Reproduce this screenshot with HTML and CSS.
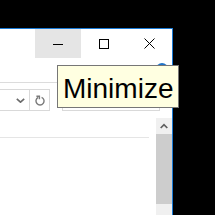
FILE: index.html
```html
<!DOCTYPE html>
<html>
<head>
<meta charset="utf-8">
<link rel="stylesheet" href="styles.css">
</head>
<body>
<div class="window">
  <div class="titlebar">
    <div class="cap cap-min hover">
      <svg width="10" height="10" viewBox="0 0 10 10"><path d="M0 5.5H10" stroke="#000" stroke-width="1"/></svg>
    </div>
    <div class="cap cap-max">
      <svg width="10" height="10" viewBox="0 0 10 10"><rect x="0.5" y="0.5" width="9" height="9" fill="none" stroke="#000" stroke-width="1"/></svg>
    </div>
    <div class="cap cap-close">
      <svg width="11" height="11" viewBox="0 0 11 11"><path d="M0.5 0.5L10.5 10.5M10.5 0.5L0.5 10.5" stroke="#000" stroke-width="1"/></svg>
    </div>
  </div>
  <div class="ribbon"><span class="help"></span></div>
  <div class="nav">
    <div class="addr">
      <div class="drop">
        <svg width="9" height="5" viewBox="0 0 9 5"><path d="M0.8 0.8L4.5 4.2L8.2 0.8" fill="none" stroke="#6b6b6b" stroke-width="1.6"/></svg>
      </div>
      <div class="refresh">
        <svg width="10" height="11" viewBox="0 0 10 11"><path d="M6.6 2.3A4 4 0 1 1 3.2 2.4" fill="none" stroke="#7a7a7a" stroke-width="1.4"/><path d="M1.4 1.2H4.4V4.2" fill="none" stroke="#7a7a7a" stroke-width="1.4"/></svg>
      </div>
    </div>
    <div class="search"></div>
  </div>
  <div class="content">
    <div class="main"><div class="header"></div></div>
    <div class="scrollbar">
      <div class="up">
        <svg width="8" height="6" viewBox="0 0 8 6"><path d="M0.7 5L4 1.6L7.3 5" fill="none" stroke="#606060" stroke-width="1.7"/></svg>
      </div>
      <div class="thumb"></div>
      <div class="track"></div>
    </div>
  </div>
</div>
<div class="tooltip">Minimize</div>
</body>
</html>
```
FILE: styles.css
```css
html, body {
  margin: 0;
  padding: 0;
  background: #000;
  width: 215px;
  height: 215px;
  overflow: hidden;
  font-family: "Liberation Sans", Arial, sans-serif;
}
.window {
  margin-top: 28px;
  width: 172px;
  height: 186px;
  background: #fff;
  border-top: 1px solid #1a7ad4;
  border-right: 1px solid #1a7ad4;
  display: flex;
  flex-direction: column;
}
.titlebar {
  height: 29px;
  display: flex;
  justify-content: flex-end;
  flex-shrink: 0;
}
.cap {
  display: flex;
  align-items: center;
  justify-content: center;
  height: 29px;
}
.cap-min { width: 46px; padding-top: 0; }
.cap-max { width: 45px; }
.cap-close { width: 46px; padding-left: 1px; box-sizing: border-box; }
.hover { background: #e5e5e5; }
.ribbon {
  height: 24px;
  border-bottom: 1px solid #dcdcdc;
  display: flex;
  justify-content: flex-end;
  align-items: flex-start;
  padding-top: 5px;
  padding-right: 4px;
  box-sizing: border-box;
  height: 25px;
  flex-shrink: 0;
}
.help {
  width: 12px;
  height: 12px;
  border-radius: 50%;
  background: #1e73c8;
}
.nav {
  display: flex;
  padding-top: 6px;
  flex-shrink: 0;
}
.addr {
  width: 50px;
  height: 22px;
  box-sizing: border-box;
  border: 1px solid #d9d9d9;
  border-left: none;
  display: flex;
}
.drop {
  width: 30px;
  border-right: 1px solid #d9d9d9;
  box-sizing: border-box;
  display: flex;
  align-items: center;
  justify-content: flex-end;
  padding-right: 4px;
  padding-top: 1px;
}
.refresh {
  width: 19px;
  display: flex;
  align-items: center;
  justify-content: center;
  padding-left: 1px;
  box-sizing: border-box;
}
.search {
  margin-left: 12px;
  width: 98px;
  height: 22px;
  box-sizing: border-box;
  border: 1px solid #d9d9d9;
}
.content {
  margin-top: 7px;
  display: flex;
  flex: 1;
  min-height: 0;
}
.main {
  width: 149px;
  margin-right: 7px;
}
.header {
  height: 19px;
  border-bottom: 1px solid #e5e5e5;
}
.scrollbar {
  width: 16px;
  background: #f0f0f0;
  display: flex;
  flex-direction: column;
}
.up {
  height: 16px;
  display: flex;
  align-items: center;
  justify-content: center;
  padding-bottom: 1px;
  box-sizing: border-box;
}
.thumb {
  height: 70px;
  background: #cdcdcd;
}
.track { flex: 1; }
.tooltip {
  position: absolute;
  left: 57px;
  top: 65px;
  width: 122px;
  height: 43px;
  box-sizing: border-box;
  border: 1px solid #767676;
  background: #ffffe1;
  color: #000;
  font-size: 28px;
  line-height: 28px;
  padding: 9px 0 0 5px;
  white-space: nowrap;
}
```
